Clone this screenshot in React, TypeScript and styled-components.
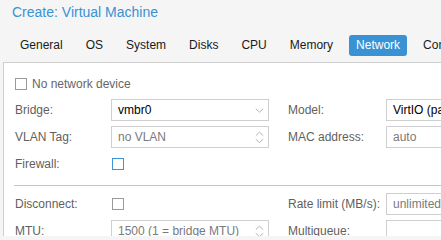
import React from "react";
import styled, { createGlobalStyle } from "styled-components";

const GlobalStyle = createGlobalStyle`
  html, body { margin: 0; padding: 0; background: #f5f5f5; }
  * { box-sizing: border-box; }
`;

const Window = styled.div`
  width: 441px;
  height: 236px;
  overflow: hidden;
  background: #f5f5f5;
  font-family: "Liberation Sans", Arial, Helvetica, sans-serif;
`;

const Header = styled.div`
  height: 30px;
  padding: 4px 0 0 12px;
  font-size: 14px;
  line-height: 16px;
  color: #3892d4;
  white-space: nowrap;
`;

const Body = styled.div`
  padding-left: 3px;
`;

const TabBar = styled.div`
  display: flex;
  gap: 9px;
  height: 32px;
  padding: 5px 0 0 10px;
  white-space: nowrap;
`;

const Tab = styled.div<{ $active?: boolean }>`
  flex-shrink: 0;
  height: 21px;
  line-height: 21px;
  padding: 0 7px;
  font-size: 12px;
  border-radius: 3px;
  color: ${(p) => (p.$active ? "#ffffff" : "#1a1a1a")};
  background: ${(p) => (p.$active ? "#3892d4" : "transparent")};
`;

const Panel = styled.div`
  background: #ffffff;
  border-top: 1px solid #cfcfcf;
  border-left: 1px solid #cfcfcf;
  padding: 10px 0 0 11px;
  height: 174px;
`;

const CheckRow = styled.div`
  display: flex;
  align-items: center;
  gap: 5px;
  height: 22px;
  margin-bottom: 4px;
  font-size: 12px;
  color: #666666;
  white-space: nowrap;
`;

const CheckBox = styled.span<{ $focus?: boolean; $inset?: boolean }>`
  display: inline-block;
  width: 12px;
  height: 12px;
  flex-shrink: 0;
  background: #ffffff;
  border: 1px solid ${(p) => (p.$focus ? "#3f94d8" : "#9a9a9a")};
  margin-left: ${(p) => (p.$inset ? "1px" : "0")};
`;

const Columns = styled.div`
  display: grid;
  grid-template-columns: 254px 254px;
  column-gap: 19px;
`;

const Column = styled.div`
  display: flex;
  flex-direction: column;
  gap: 5px;
`;

const FieldRow = styled.div`
  display: flex;
  align-items: center;
  height: 22px;
`;

const FieldLabel = styled.div<{ $width: number }>`
  width: ${(p) => p.$width}px;
  flex-shrink: 0;
  font-size: 12px;
  color: #5f5f5f;
  white-space: nowrap;
`;

const Input = styled.div<{ $placeholder?: boolean }>`
  width: 158px;
  height: 22px;
  flex-shrink: 0;
  display: flex;
  align-items: center;
  border: 1px solid #cfcfcf;
  background: #ffffff;
  padding-left: 6px;
  font-size: 12px;
  color: ${(p) => (p.$placeholder ? "#7a7a7a" : "#000000")};
`;

const InputText = styled.span`
  flex: 1;
  overflow: hidden;
  white-space: nowrap;
`;

const Trigger = styled.span`
  width: 18px;
  height: 100%;
  flex-shrink: 0;
  display: flex;
  align-items: center;
  justify-content: center;
`;

const Separator = styled.div`
  height: 1px;
  background: #c4c4c4;
  margin: 10px 0 7px -1px;
`;

const ComboArrow = () => (
  <svg width="9" height="5" viewBox="0 0 9 5">
    <path d="M0.8 0.8 L4.5 4.2 L8.2 0.8" fill="none" stroke="#b3b3b3" strokeWidth="1" />
  </svg>
);

const SpinArrows = () => (
  <svg width="9" height="13" viewBox="0 0 9 13">
    <path d="M0.8 4.6 L4.5 1.2 L8.2 4.6" fill="none" stroke="#b3b3b3" strokeWidth="1" />
    <path d="M0.8 8.2 L4.5 11.6 L8.2 8.2" fill="none" stroke="#b3b3b3" strokeWidth="1" />
  </svg>
);

type FieldProps = {
  label: string;
  labelWidth: number;
  value?: string;
  placeholder?: boolean;
  trigger?: "combo" | "spin";
};

const Field = ({ label, labelWidth, value, placeholder, trigger }: FieldProps) => (
  <FieldRow>
    <FieldLabel $width={labelWidth}>{label}</FieldLabel>
    <Input $placeholder={placeholder}>
      <InputText>{value}</InputText>
      {trigger && <Trigger>{trigger === "combo" ? <ComboArrow /> : <SpinArrows />}</Trigger>}
    </Input>
  </FieldRow>
);

const CheckField = ({ label, labelWidth, focus }: { label: string; labelWidth: number; focus?: boolean }) => (
  <FieldRow>
    <FieldLabel $width={labelWidth}>{label}</FieldLabel>
    <CheckBox $focus={focus} $inset />
  </FieldRow>
);

const tabs = ["General", "OS", "System", "Disks", "CPU", "Memory", "Network", "Confirm"];

export default function App() {
  return (
    <>
      <GlobalStyle />
      <Window>
        <Header>Create: Virtual Machine</Header>
        <Body>
          <TabBar>
            {tabs.map((t) => (
              <Tab key={t} $active={t === "Network"}>
                {t}
              </Tab>
            ))}
          </TabBar>
          <Panel>
            <CheckRow>
              <CheckBox />
              No network device
            </CheckRow>
            <Columns>
              <Column>
                <Field label="Bridge:" labelWidth={96} value="vmbr0" trigger="combo" />
                <Field label="VLAN Tag:" labelWidth={96} value="no VLAN" placeholder trigger="spin" />
                <CheckField label="Firewall:" labelWidth={96} focus />
              </Column>
              <Column>
                <Field label="Model:" labelWidth={98} value="VirtIO (paravirtualized)" trigger="combo" />
                <Field label="MAC address:" labelWidth={98} value="auto" placeholder />
              </Column>
            </Columns>
            <Separator />
            <Columns>
              <Column>
                <CheckField label="Disconnect:" labelWidth={96} />
                <Field label="MTU:" labelWidth={96} value="1500 (1 = bridge MTU)" placeholder trigger="spin" />
              </Column>
              <Column>
                <Field label="Rate limit (MB/s):" labelWidth={98} value="unlimited" placeholder trigger="spin" />
                <Field label="Multiqueue:" labelWidth={98} value="" trigger="spin" />
              </Column>
            </Columns>
          </Panel>
        </Body>
      </Window>
    </>
  );
}
